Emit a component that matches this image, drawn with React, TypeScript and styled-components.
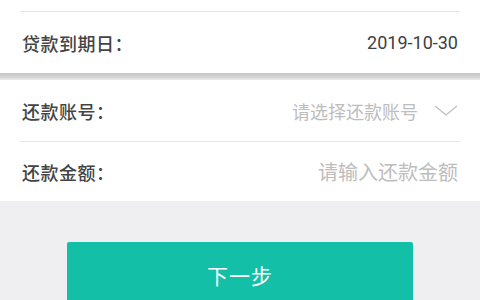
import styled, { createGlobalStyle } from "styled-components";

const GlobalStyle = createGlobalStyle`
  html, body {
    margin: 0;
    padding: 0;
    background: #efeef1;
    font-family: "Noto Sans CJK SC", "Liberation Sans", sans-serif;
  }
  body {
    width: 480px;
    height: 300px;
    overflow: hidden;
  }
`;

const Page = styled.div`
  width: 480px;
  height: 300px;
  overflow: hidden;
  display: flex;
  flex-direction: column;
  & > * {
    flex-shrink: 0;
  }
`;

const Section = styled.div<{ $shift?: number }>`
  background: #fff;
  padding: 0 20px;
  margin-top: ${(p) => p.$shift || 0}px;
`;

const Row = styled.div<{ $h?: number; $line?: boolean }>`
  height: ${(p) => p.$h || 61}px;
  display: flex;
  align-items: center;
  justify-content: space-between;
  padding: 0 2px;
  border-bottom: ${(p) => (p.$line ? "1px solid #e6e6e6" : "none")};
`;

const Label = styled.div`
  font-size: 18px;
  font-weight: 500;
  color: #444;
  letter-spacing: 0.5px;
`;

const Value = styled.div`
  font-family: "Roboto", "Liberation Sans", sans-serif;
  font-size: 18px;
  color: #404040;
`;

const Placeholder = styled.div<{ $size?: number }>`
  font-size: ${(p) => p.$size || 18}px;
  color: #bdbdbd;
  display: flex;
  align-items: center;
  gap: 16px;
`;

const Band = styled.div`
  height: 7px;
  background: linear-gradient(#c6c6c6, #d4d4d4 60%, #ececec);
`;

const ButtonWrap = styled.div`
  padding: 41px 67px 0;
`;

const NextButton = styled.button`
  width: 100%;
  height: 66px;
  border: none;
  border-radius: 2px;
  background: #13bfa6;
  color: #fff;
  font-family: "Noto Sans CJK SC", sans-serif;
  font-size: 21px;
  padding-bottom: 2px;
  letter-spacing: 1px;
`;

const Chevron = () => (
  <svg width="24" height="12" viewBox="0 0 24 12">
    <path d="M1 1 L12 10 L23 1" fill="none" stroke="#c0c0c0" strokeWidth="1.3" />
  </svg>
);

export default function App() {
  return (
    <Page>
      <GlobalStyle />
      <Section $shift={-50}>
        <Row $line />
        <Row $h={61}>
          <Label>贷款到期日：</Label>
          <Value>2019-10-30</Value>
        </Row>
      </Section>
      <Band />
      <Section>
        <Row $line>
          <Label>还款账号：</Label>
          <Placeholder>
            请选择还款账号
            <Chevron />
          </Placeholder>
        </Row>
        <Row $h={59}>
          <Label>还款金额：</Label>
          <Placeholder $size={20}>请输入还款金额</Placeholder>
        </Row>
      </Section>
      <ButtonWrap>
        <NextButton>下一步</NextButton>
      </ButtonWrap>
    </Page>
  );
}
